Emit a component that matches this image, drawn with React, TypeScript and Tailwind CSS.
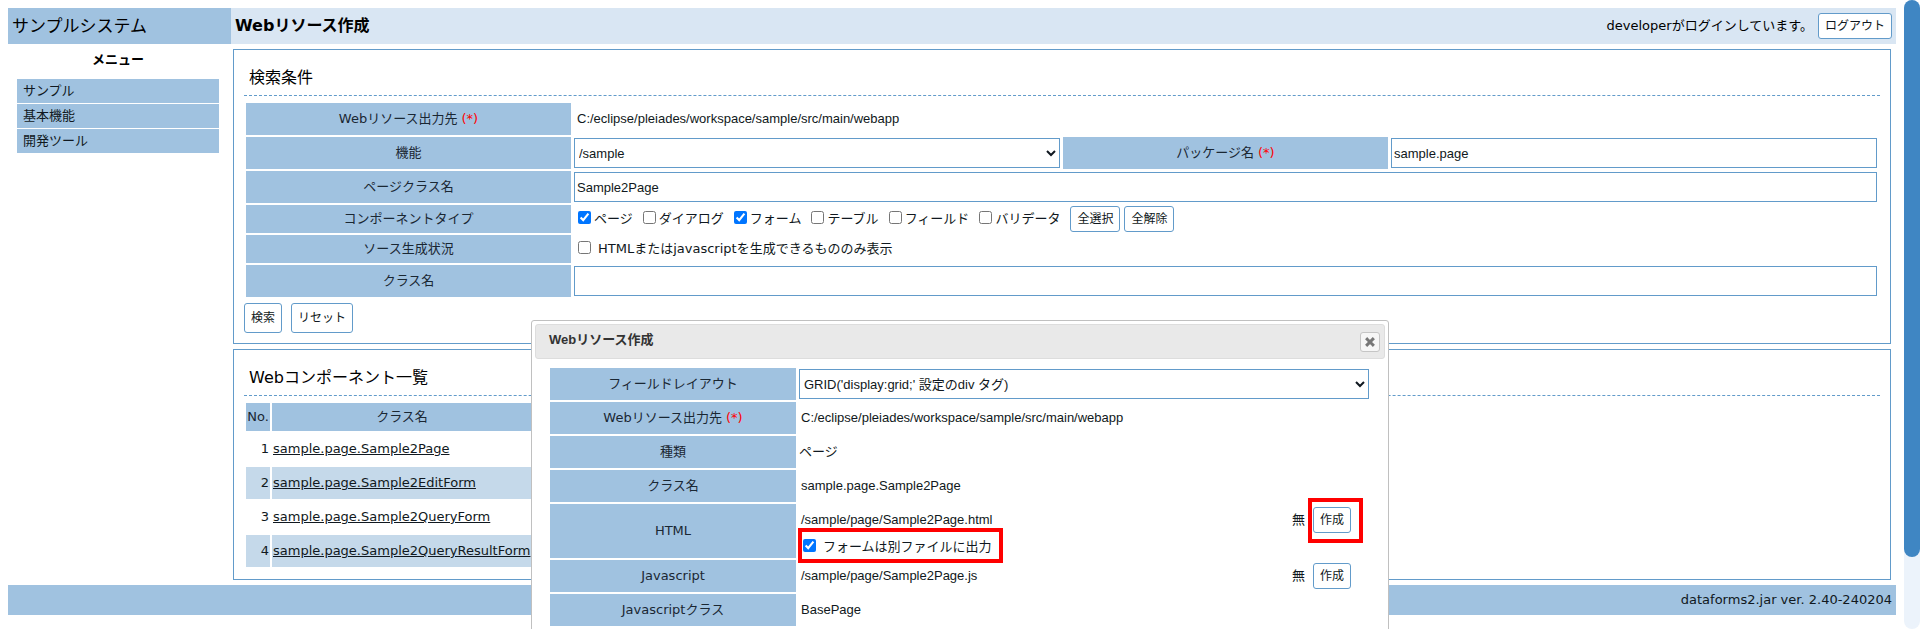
import React from "react";

const box = "h-[30px] w-full min-w-0 border border-[#629bca] bg-white font-['Liberation_Sans','Noto_Sans_CJK_JP',sans-serif] text-[13px] text-[#101820]";
const value = "font-['Liberation_Sans','Noto_Sans_CJK_JP',sans-serif] text-[13px]";
const button = "shrink-0 rounded-[3px] border border-[#629bca] bg-white px-[6px] text-[12px] text-[#101820]";

type CaptionProps = { children: React.ReactNode; htmlFor?: string; required?: boolean; className?: string };

function Caption({ children, htmlFor, required, className = "" }: CaptionProps) {
  const Tag = htmlFor ? "label" : "div";
  return (
    <Tag htmlFor={htmlFor} className={`flex items-center justify-center gap-1 bg-[#a0c2e0] text-[#1a2733] ${className}`}>
      {children}
      {required && <span className="text-[#ff0000]">(*)</span>}
    </Tag>
  );
}

function Check({ label, checked, wide }: { label: string; checked?: boolean; wide?: boolean }) {
  return (
    <label className={`flex items-center ${wide ? "gap-[7px]" : "gap-[3px]"}`}>
      <input type="checkbox" defaultChecked={checked} className="mb-[3px] size-[13px]" />
      {label}
    </label>
  );
}

function Panel({ title, children }: { title: string; children: React.ReactNode }) {
  return (
    <section className="border border-[#629bca] px-[10px] pb-[10px]">
      <h2 className="mb-[7px] flex h-[46px] items-center border-b border-dashed border-[#629bca] pt-[11px] pl-[5px] text-[16px] text-black">
        {title}
      </h2>
      {children}
    </section>
  );
}

const types = [
  { label: "ページ", checked: true },
  { label: "ダイアログ" },
  { label: "フォーム", checked: true },
  { label: "テーブル" },
  { label: "フィールド" },
  { label: "バリデータ" },
];

const classes = [
  "sample.page.Sample2Page",
  "sample.page.Sample2EditForm",
  "sample.page.Sample2QueryForm",
  "sample.page.Sample2QueryResultForm",
];

function SearchPanel() {
  return (
    <Panel title="検索条件">
      <form>
        <div className="mr-[3px] ml-[2px] grid grid-cols-[325px_1fr_325px_1fr] items-center gap-x-[3px] gap-y-[2px]">
          <Caption required className="h-8">Webリソース出力先</Caption>
          <div className={`col-span-3 pl-[3px] ${value}`}>C:/eclipse/pleiades/workspace/sample/src/main/webapp</div>

          <Caption htmlFor="func" className="h-8">機能</Caption>
          <select id="func" className={box}>
            <option>/sample</option>
          </select>
          <Caption htmlFor="pkg" required className="h-8">パッケージ名</Caption>
          <input id="pkg" defaultValue="sample.page" className={`${box} px-[2px]`} />

          <Caption htmlFor="page-class" className="h-8">ページクラス名</Caption>
          <input id="page-class" defaultValue="Sample2Page" className={`${box} col-span-3 px-[2px]`} />

          <Caption className="h-7">コンポーネントタイプ</Caption>
          <div className="col-span-3 flex items-center gap-[10px] pl-1">
            {types.map((t) => (
              <Check key={t.label} {...t} />
            ))}
            <div className="flex gap-1">
              <button type="button" className={`${button} h-[26px]`}>全選択</button>
              <button type="button" className={`${button} h-[26px]`}>全解除</button>
            </div>
          </div>

          <Caption className="h-7">ソース生成状況</Caption>
          <div className="col-span-3 pl-1">
            <Check label="HTMLまたはjavascriptを生成できるもののみ表示" wide />
          </div>

          <Caption htmlFor="class-name" className="h-8">クラス名</Caption>
          <input id="class-name" className={`${box} col-span-3 px-[2px]`} />
        </div>
        <div className="mt-[6px] flex gap-[9px]">
          <button type="button" className={`${button} h-[30px]`}>検索</button>
          <button type="reset" className={`${button} h-[30px]`}>リセット</button>
        </div>
      </form>
    </Panel>
  );
}

function ResultPanel() {
  return (
    <Panel title="Webコンポーネント一覧">
      <table className="-mt-[2px] border-separate border-spacing-[2px]">
        <thead>
          <tr className="h-7 bg-[#a0c2e0] text-[#1a2733]">
            <th className="w-6 p-0 text-center font-normal">No.</th>
            <th className="w-[260px] p-0 font-normal">クラス名</th>
          </tr>
        </thead>
        <tbody>
          {classes.map((name, i) => (
            <tr key={name} className="h-8 even:bg-[#c5d9ea]">
              <td className="p-0 pr-px text-right">{i + 1}</td>
              <td className="p-0 pl-px">
                <a href="#" className="text-[#101820] underline">{name}</a>
              </td>
            </tr>
          ))}
        </tbody>
      </table>
    </Panel>
  );
}

function CreateButton({ marked }: { marked?: boolean }) {
  return (
    <div className="mr-[18px] flex items-center gap-2">
      <span>無</span>
      <div className="relative flex">
        <button type="button" className={`${button} h-[26px]`}>作成</button>
        {marked && (
          <span className="pointer-events-none absolute -top-[9px] -right-[12px] -bottom-[10px] -left-[5px] border-4 border-[#ff0000]" />
        )}
      </div>
    </div>
  );
}

function ResourceDialog() {
  return (
    <div
      role="dialog"
      aria-labelledby="dialog-title"
      className="absolute inset-x-0 top-80 mx-auto w-[858px] rounded-[3px] border border-[#c0c0c0] bg-white p-[3px] pb-10"
    >
      <div className="flex h-[35px] items-center justify-between rounded-[3px] border border-[#dddddd] bg-[#e9e9e9] pr-1 pl-[13px]">
        <h2 id="dialog-title" className="pb-[3px] font-['Liberation_Sans','Noto_Sans_CJK_JP',sans-serif] text-[13px] font-bold text-[#333333]">
          Webリソース作成
        </h2>
        <button type="button" aria-label="閉じる" className="flex size-5 items-center justify-center rounded-[3px] border border-[#c5c5c5] bg-[#f6f6f6]">
          <svg viewBox="0 0 10 10" className="size-[10px]" stroke="#777777" strokeWidth="3" strokeLinecap="square">
            <path d="M2.2 2.2 7.8 7.8M7.8 2.2 2.2 7.8" />
          </svg>
        </button>
      </div>

      <form className="mt-[9px] mr-4 ml-[15px] grid grid-cols-[246px_1fr] items-center gap-x-[3px] gap-y-[2px]">
        <Caption htmlFor="layout" className="h-8">フィールドレイアウト</Caption>
        <select id="layout" className={box}>
          <option>GRID('display:grid;' 設定のdiv タグ)</option>
        </select>

        <Caption required className="h-8">Webリソース出力先</Caption>
        <div className={`pl-[2px] ${value}`}>C:/eclipse/pleiades/workspace/sample/src/main/webapp</div>

        <Caption className="h-8">種類</Caption>
        <div>ページ</div>

        <Caption className="h-8">クラス名</Caption>
        <div className={`pl-[2px] ${value}`}>sample.page.Sample2Page</div>

        <Caption className="h-[54px]">HTML</Caption>
        <div className="flex flex-col">
          <div className="flex h-8 items-center justify-between">
            <span className={`pl-[2px] ${value}`}>/sample/page/Sample2Page.html</span>
            <CreateButton marked />
          </div>
          <div className="relative flex h-[22px] w-[204px] items-center pl-1">
            <Check label="フォームは別ファイルに出力" checked wide />
            <span className="pointer-events-none absolute -top-2 right-0 -bottom-[5px] -left-px border-4 border-[#ff0000]" />
          </div>
        </div>

        <Caption className="h-8">Javascript</Caption>
        <div className="flex items-center justify-between">
          <span className={`pl-[2px] ${value}`}>/sample/page/Sample2Page.js</span>
          <CreateButton />
        </div>

        <Caption className="h-8">Javascriptクラス</Caption>
        <div className={`pl-[2px] ${value}`}>BasePage</div>
      </form>
    </div>
  );
}

export default function App() {
  return (
    <div className="relative flex h-screen overflow-hidden bg-white font-['DejaVu_Sans','Noto_Sans_CJK_JP',sans-serif] text-[13px] leading-5 text-[#101820]">
      <div className="min-w-0 flex-1 p-2">
        <header className="flex h-9 text-black">
          <div className="flex w-[223px] items-center bg-[#a0c2e0] pl-1 text-[17px]">サンプルシステム</div>
          <div className="flex flex-1 items-center justify-between bg-[#d9e6f3] pr-1 pl-1">
            <h1 className="text-[16px] font-bold">Webリソース作成</h1>
            <div className="flex items-center gap-[5px]">
              <span>developerがログインしています。</span>
              <button type="button" className={`${button} h-[26px]`}>ログアウト</button>
            </div>
          </div>
        </header>

        <div className="flex">
          <nav className="w-[225px] pt-[6px] pr-[14px] pl-[9px]">
            <h2 className="mb-[9px] text-center font-bold text-black">メニュー</h2>
            <ul className="flex flex-col gap-px">
              {["サンプル", "基本機能", "開発ツール"].map((item) => (
                <li key={item}>
                  <a href="#" className="flex h-6 items-center bg-[#a0c2e0] pb-px pl-[6px] text-[#101820]">{item}</a>
                </li>
              ))}
            </ul>
          </nav>
          <main className="flex min-w-0 flex-1 flex-col gap-[5px] py-[5px] pr-[5px]">
            <SearchPanel />
            <ResultPanel />
          </main>
        </div>

        <footer className="flex h-[30px] items-center justify-end bg-[#a0c2e0] pr-1">dataforms2.jar ver. 2.40-240204</footer>
      </div>

      <div className="w-4 rounded-full bg-[#ecf3fb]">
        <div className="h-[557px] rounded-full bg-[#3f86c3]" />
      </div>

      <ResourceDialog />
    </div>
  );
}
